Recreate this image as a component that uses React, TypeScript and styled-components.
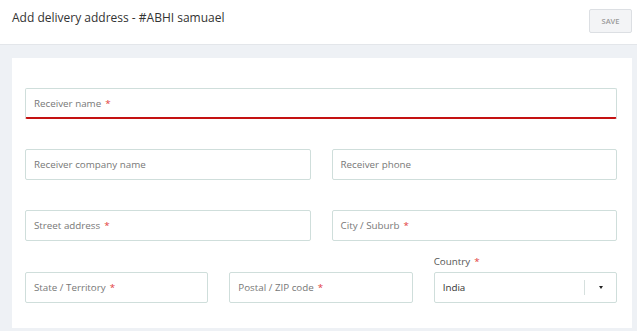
import styled, { createGlobalStyle } from "styled-components";

const GlobalStyle = createGlobalStyle`
  html, body {
    margin: 0;
    padding: 0;
    background: #eef1f5;
    font-family: "Open Sans", "Noto Sans", sans-serif;
  }
  * {
    box-sizing: border-box;
  }
`;

const StyledPage = styled.div`
  width: 637px;
  height: 331px;
  overflow: hidden;
  background-color: #eef1f5;
`;

const StyledHeader = styled.div`
  height: 45px;
  background-color: white;
  border-bottom: 1px solid #e3e6ea;
  display: flex;
  align-items: flex-start;
  justify-content: space-between;
  padding: 0 5px 0 12px;
`;

const StyledTitle = styled.h1`
  margin: 9px 0 0 0;
  font-size: 12px;
  font-weight: normal;
  color: #333;
`;

const StyledSaveButton = styled.button`
  margin-top: 9px;
  width: 43px;
  height: 24px;
  padding: 0;
  background-color: #f3f4f6;
  border: 1px solid #dcdfe3;
  border-radius: 2px;
  color: #999;
  font-family: inherit;
  font-size: 7.5px;
  font-weight: 600;
`;

const StyledCard = styled.div`
  margin: 13px 0 0 12px;
  width: 620px;
  height: 270px;
  background-color: white;
  padding: 30px 15px 0 13px;
  display: flex;
  flex-direction: column;
  gap: 30px;
`;

const StyledRow = styled.div<{ $columns: number; $pullUp?: number }>`
  display: grid;
  grid-template-columns: repeat(${(p) => p.$columns}, 1fr);
  column-gap: 21px;
  align-items: end;
  margin-top: ${(p) => (p.$pullUp ? -p.$pullUp : 0)}px;
`;

const StyledField = styled.div`
  display: flex;
  flex-direction: column;
`;

const StyledLabel = styled.div`
  font-size: 9.8px;
  line-height: 13px;
  color: #555;
  margin-bottom: 4px;
`;

const StyledInput = styled.div<{ $active?: boolean }>`
  height: 31px;
  border: 1px solid #cfdedb;
  border-bottom: ${(p) => (p.$active ? "2px solid #c41212" : "1px solid #cfdedb")};
  border-radius: 2px;
  padding: 0 8px;
  display: flex;
  align-items: center;
  font-size: 9.8px;
  color: #777;
`;

const StyledStar = styled.span`
  color: #e23b3b;
  margin-left: 4px;
`;

const StyledSelectValue = styled.span`
  flex: 1;
  color: #333;
`;

const StyledDivider = styled.span`
  width: 1px;
  height: 15px;
  background-color: #d6e0de;
  margin-right: 14px;
`;

const StyledArrow = styled.span`
  width: 0;
  height: 0;
  border-left: 2.5px solid transparent;
  border-right: 2.5px solid transparent;
  border-top: 3.5px solid #222;
  margin-right: 5px;
`;

const App = () => {
  return (
    <StyledPage>
      <GlobalStyle />
      <StyledHeader>
        <StyledTitle>Add delivery address - #ABHI samuael</StyledTitle>
        <StyledSaveButton>SAVE</StyledSaveButton>
      </StyledHeader>
      <StyledCard>
        <StyledInput $active>
          Receiver name<StyledStar>*</StyledStar>
        </StyledInput>
        <StyledRow $columns={2}>
          <StyledInput>Receiver company name</StyledInput>
          <StyledInput>Receiver phone</StyledInput>
        </StyledRow>
        <StyledRow $columns={2}>
          <StyledInput>
            Street address<StyledStar>*</StyledStar>
          </StyledInput>
          <StyledInput>
            City / Suburb<StyledStar>*</StyledStar>
          </StyledInput>
        </StyledRow>
        <StyledRow $columns={3} $pullUp={16}>
          <StyledInput>
            State / Territory<StyledStar>*</StyledStar>
          </StyledInput>
          <StyledInput>
            Postal / ZIP code<StyledStar>*</StyledStar>
          </StyledInput>
          <StyledField>
            <StyledLabel>
              Country<StyledStar>*</StyledStar>
            </StyledLabel>
            <StyledInput>
              <StyledSelectValue>India</StyledSelectValue>
              <StyledDivider />
              <StyledArrow />
            </StyledInput>
          </StyledField>
        </StyledRow>
      </StyledCard>
    </StyledPage>
  );
};

export default App;
